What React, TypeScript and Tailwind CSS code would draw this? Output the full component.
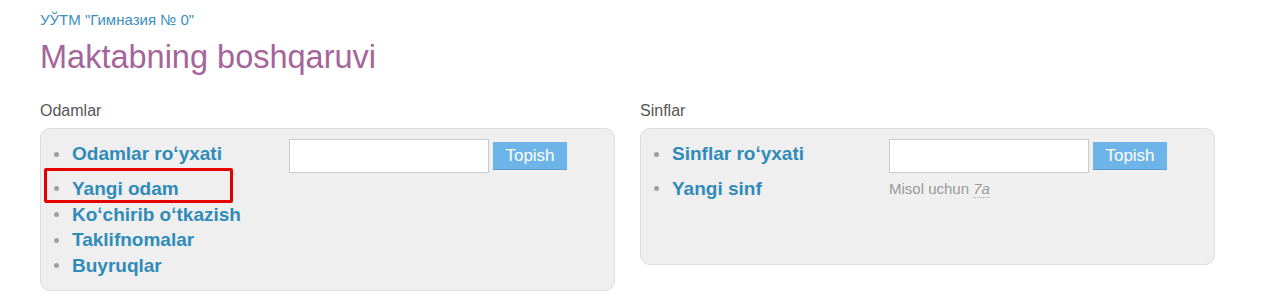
import React from "react";

const font = { fontFamily: '"Liberation Sans", Arial, sans-serif' };

type Item = { label: string; marked?: boolean };

const Bullet = () => <span className="w-[5px] h-[5px] rounded-full bg-[#a0a0a0] shrink-0" />;

const LinkList = ({ items }: { items: Item[] }) => (
  <ul className="w-[236px] shrink-0 mt-[2px]">
    {items.map((it, i) => (
      <li
        key={it.label}
        className={`flex items-center gap-[13px] pl-[1px] ${i === 0 ? "h-[35px] pb-[9px]" : "h-[25.7px]"}`}
      >
        <Bullet />
        <a href="#" className="text-[19px] leading-[26px] font-bold text-[#2f8bb9] whitespace-nowrap">
          {it.label}
        </a>
      </li>
    ))}
  </ul>
);

const SearchForm = ({ hint }: { hint?: boolean }) => (
  <div className="flex flex-col">
    <div className="flex items-center gap-[4px]">
      <input
        type="text"
        className="w-[200px] h-[34px] bg-white border border-[#cccccc] outline-none px-2 text-[15px]"
      />
      <button className="w-[74px] h-[28px] bg-[#6db4e8] border-b border-[#5b9fd3] text-white text-[17px] leading-none">
        Topish
      </button>
    </div>
    {hint && (
      <div className="mt-[6px] text-[15px] leading-[19px] text-[#9a9a9a]">
        Misol uchun <i className="border-b border-dotted border-[#aaaaaa]">7a</i>
      </div>
    )}
  </div>
);

const Section = ({
  title,
  items,
  hint,
  tall,
}: {
  title: string;
  items: Item[];
  hint?: boolean;
  tall?: boolean;
}) => (
  <section className="w-[575px]">
    <h2 className="text-[16px] leading-[20px] text-[#555555]">{title}</h2>
    <div
      className={`relative mt-[7px] flex rounded-[10px] border border-[#dddddd] bg-[#efefef] pl-[12px] pt-[10px] ${
        tall ? "h-[163px]" : "h-[137px]"
      }`}
    >
      <LinkList items={items} />
      <SearchForm hint={hint} />
      {items.some((it) => it.marked) && (
        <div className="absolute left-[3px] top-[39px] w-[189px] h-[35px] border-[3px] border-[#e40000] rounded-[2px]" />
      )}
    </div>
  </section>
);

export default function App() {
  return (
    <div className="min-h-[308px] bg-white px-10 pt-[11px]" style={font}>
      <div className="text-[15px] leading-[18px] text-[#3a8fc1]">УЎТМ "Гимназия № 0"</div>
      <h1 className="text-[32.5px] leading-[40px] text-[#a5659b] mt-[8px]">Maktabning boshqaruvi</h1>
      <div className="flex gap-[25px] mt-[24px]">
        <Section
          title="Odamlar"
          tall
          items={[
            { label: "Odamlar roʻyxati" },
            { label: "Yangi odam", marked: true },
            { label: "Koʻchirib oʻtkazish" },
            { label: "Taklifnomalar" },
            { label: "Buyruqlar" },
          ]}
        />
        <Section
          title="Sinflar"
          hint
          items={[{ label: "Sinflar roʻyxati" }, { label: "Yangi sinf" }]}
        />
      </div>
    </div>
  );
}
